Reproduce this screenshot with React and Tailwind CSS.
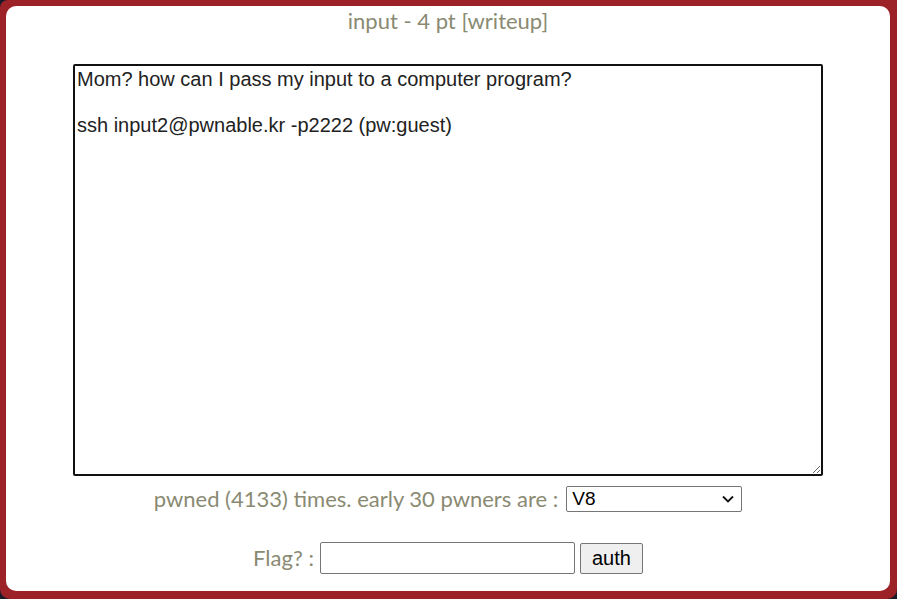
export default function App() {
  const olive = "text-[#8a8a72]";
  const cal = { fontFamily: "Lato, 'Open Sans', sans-serif" };
  const arial = { fontFamily: "'Liberation Sans', Arial, sans-serif" };
  return (
    <div className="w-[897px] h-[599px] bg-[#1b1a2a] overflow-hidden">
      <div className="w-full h-full bg-[#9c2227] rounded-tl-[8px] rounded-bl-[10px] rounded-br-[10px] pt-[6px] pl-[6px] pr-[7px] pb-[8px]">
        <div className="w-full h-full bg-white rounded-[10px] flex flex-col items-center">
          <div className={`mt-[2px] text-[22px] leading-[26px] ${olive}`} style={cal}>
            input - 4 pt [writeup]
          </div>
          <textarea
            readOnly
            className="mt-[30px] w-[750px] h-[412px] border-2 border-[#111] rounded-[2px] px-[2px] py-[2px] text-[20px] leading-[23px] text-[#222] resize-y outline-none"
            style={arial}
            defaultValue={"Mom? how can I pass my input to a computer program?\n\nssh input2@pwnable.kr -p2222 (pw:guest)"}
          />
          <div className={`mt-[10px] flex items-center text-[22px] leading-[26px] ${olive}`} style={cal}>
            <span>pwned (4133) times. early 30 pwners are :</span>
            <div className="relative ml-[8px] w-[176px] h-[26px] border border-[#767676] rounded-[2px] bg-white">
              <span className="absolute left-[5px] top-[1px] text-[19px] leading-[22px] text-black" style={arial}>
                V8
              </span>
              <svg className="absolute right-[7px] top-[8px]" width="12" height="8" viewBox="0 0 12 8">
                <path d="M1 1.5 L6 6.5 L11 1.5" fill="none" stroke="#111" strokeWidth="1.8" />
              </svg>
            </div>
          </div>
          <div className={`mt-[30px] flex items-center text-[22px] leading-[26px] ${olive}`} style={cal}>
            <span>Flag? :</span>
            <div className="ml-[6px] w-[255px] h-[32px] border border-[#767676] rounded-[2px] bg-white" />
            <div
              className="ml-[5px] w-[63px] h-[31px] border border-[#767676] rounded-[2px] bg-[#efefef] flex items-center justify-center text-[20px] text-black"
              style={arial}
            >
              auth
            </div>
          </div>
        </div>
      </div>
    </div>
  );
}
